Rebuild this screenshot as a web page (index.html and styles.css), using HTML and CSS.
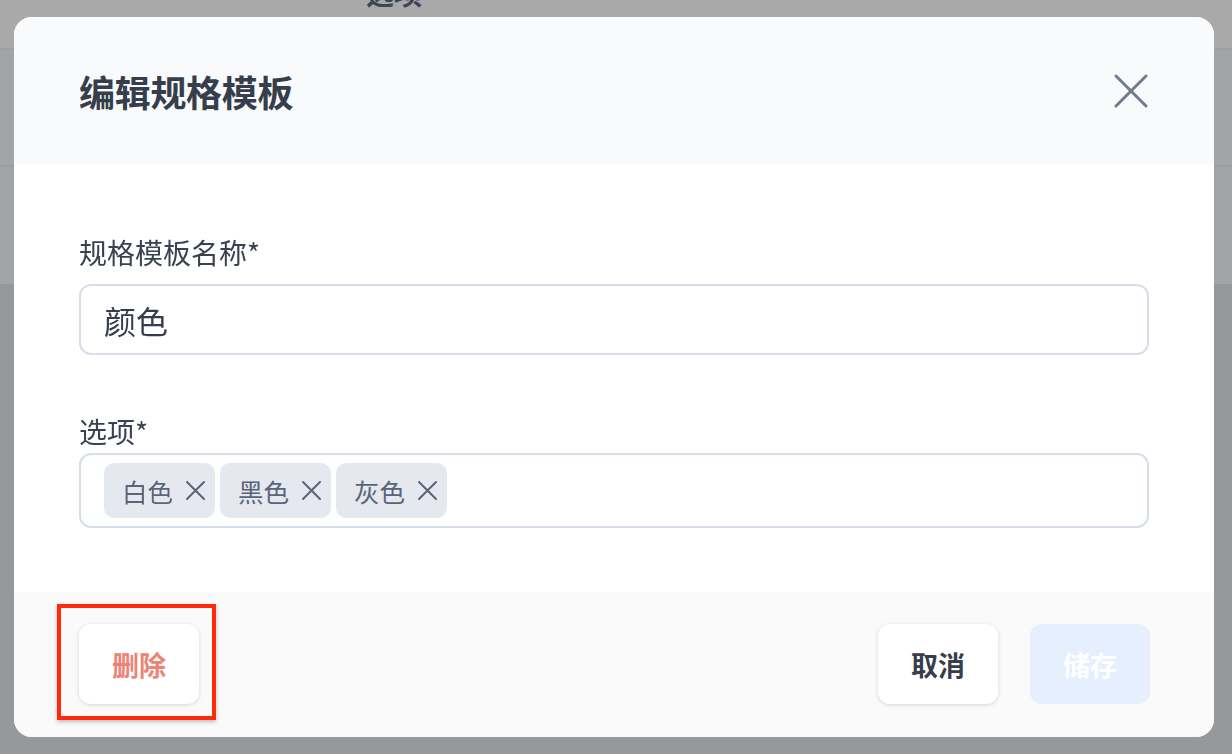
FILE: index.html
```html
<!DOCTYPE html>
<html lang="zh-CN">
<head>
<meta charset="utf-8">
<title>编辑规格模板</title>
<link rel="stylesheet" href="styles.css">
</head>
<body>
<div class="backdrop">
  <div class="bg-top"><span class="bg-text">选项</span></div>
  <div class="bg-mid"></div>
  <div class="bg-low"></div>
</div>

<div class="modal">
  <header class="modal-header">
    <h1 class="modal-title">编辑规格模板</h1>
    <button class="close-btn" aria-label="关闭">
      <svg width="34" height="34" viewBox="0 0 34 34" fill="none" stroke="currentColor" stroke-width="3" stroke-linecap="round">
        <path d="M2 2 L32 32 M32 2 L2 32"/>
      </svg>
    </button>
  </header>

  <section class="modal-body">
    <label class="field-label">规格模板名称*</label>
    <div class="text-input">颜色</div>

    <label class="field-label second">选项*</label>
    <div class="tag-input">
      <span class="tag">白色<svg class="tag-x" width="21" height="21" viewBox="0 0 21 21" fill="none" stroke="currentColor" stroke-width="2" stroke-linecap="round"><path d="M2 2 L19 19 M19 2 L2 19"/></svg></span>
      <span class="tag">黑色<svg class="tag-x" width="21" height="21" viewBox="0 0 21 21" fill="none" stroke="currentColor" stroke-width="2" stroke-linecap="round"><path d="M2 2 L19 19 M19 2 L2 19"/></svg></span>
      <span class="tag">灰色<svg class="tag-x" width="21" height="21" viewBox="0 0 21 21" fill="none" stroke="currentColor" stroke-width="2" stroke-linecap="round"><path d="M2 2 L19 19 M19 2 L2 19"/></svg></span>
    </div>
  </section>

  <footer class="modal-footer">
    <div class="delete-wrap">
      <button class="btn btn-delete">删除</button>
      <span class="annotation"></span>
    </div>
    <div class="footer-right">
      <button class="btn btn-cancel">取消</button>
      <button class="btn btn-save">储存</button>
    </div>
  </footer>
</div>
</body>
</html>
```

FILE: styles.css
```css
* { box-sizing: border-box; }

html, body {
  margin: 0;
  padding: 0;
  width: 1232px;
  height: 754px;
  overflow: hidden;
  font-family: "Noto Sans CJK SC", "Noto Sans", sans-serif;
}

.backdrop {
  display: flex;
  flex-direction: column;
  width: 1232px;
  height: 754px;
}

.bg-top {
  height: 50px;
  background: #a9a9a9;
  border-bottom: 2px solid #9ba0a8;
  overflow: hidden;
  display: flex;
  padding-left: 366px;
}

.bg-text {
  font-size: 28px;
  font-weight: 700;
  color: #3e4554;
  line-height: 28px;
  margin-top: -21px;
}

.bg-mid {
  height: 234px;
  background: #a3a4a6;
  border-top: 115px solid #a3a4a6;
}

.bg-mid::after {
  content: "";
  display: block;
  height: 2px;
  background: #989ca3;
}

.bg-low {
  flex: 1;
  background: #97989b;
}

.modal {
  position: fixed;
  left: 14px;
  top: 17px;
  width: 1200px;
  height: 720px;
  border-radius: 18px;
  overflow: hidden;
  background: #ffffff;
  display: flex;
  flex-direction: column;
}

.modal-header {
  height: 147px;
  background: #f9fafb;
  display: flex;
  align-items: center;
  justify-content: space-between;
  padding: 0 66px 0 65px;
}

.modal-title {
  margin: 0;
  font-size: 36px;
  font-weight: 700;
  color: #363d4b;
  line-height: 48px;
  letter-spacing: -0.3px;
}

.close-btn {
  border: 0;
  background: transparent;
  padding: 0;
  width: 34px;
  height: 34px;
  color: #6f7b8f;
  display: flex;
}

.modal-body {
  height: 428px;
  padding: 68px 65px 0 65px;
  display: flex;
  flex-direction: column;
}

.field-label {
  font-size: 28px;
  line-height: 40px;
  color: #3a4150;
  display: block;
}

.field-label.second {
  margin-top: 56px;
}

.text-input {
  margin-top: 12px;
  height: 71px;
  border: 2px solid #d6dfe9;
  border-radius: 12px;
  padding-left: 23px;
  display: flex;
  align-items: center;
  font-size: 32px;
  color: #353c4a;
}

.tag-input {
  margin-top: 2px;
  height: 75px;
  border: 2px solid #d6dfe9;
  border-radius: 12px;
  padding: 0 23px;
  display: flex;
  align-items: center;
  gap: 5px;
}

.tag {
  width: 111px;
  height: 55px;
  background: #e5e8ee;
  border-radius: 10px;
  display: flex;
  align-items: center;
  padding-left: 18px;
  font-size: 25.5px;
  color: #5a6479;
  gap: 12px;
}

.tag-x {
  color: #5a6479;
  flex-shrink: 0;
}

.modal-footer {
  flex: 1;
  background: #fafafa;
  display: flex;
  justify-content: space-between;
  align-items: flex-start;
  padding: 32px 64px 0 65px;
}

.delete-wrap {
  position: relative;
}

.footer-right {
  display: flex;
  gap: 32px;
}

.btn {
  width: 120px;
  height: 80px;
  border: 0;
  border-radius: 12px;
  background: #ffffff;
  font-family: "Noto Sans CJK SC", "Noto Sans", sans-serif;
  font-size: 27px;
  font-weight: 700;
  box-shadow: 0 1px 4px rgba(0, 0, 0, 0.14);
  display: flex;
  align-items: center;
  justify-content: center;
  padding: 0;
}

.btn-delete { color: #ec8476; }
.btn-cancel { color: #363d4b; }

.btn-save {
  background: #e6effd;
  color: #ffffff;
  box-shadow: none;
}

.annotation {
  position: absolute;
  left: -22px;
  top: -20px;
  width: 159px;
  height: 116px;
  border: 4px solid #ff2a0c;
  box-shadow: 0 2px 4px rgba(0, 0, 0, 0.25);
  pointer-events: none;
}
```
